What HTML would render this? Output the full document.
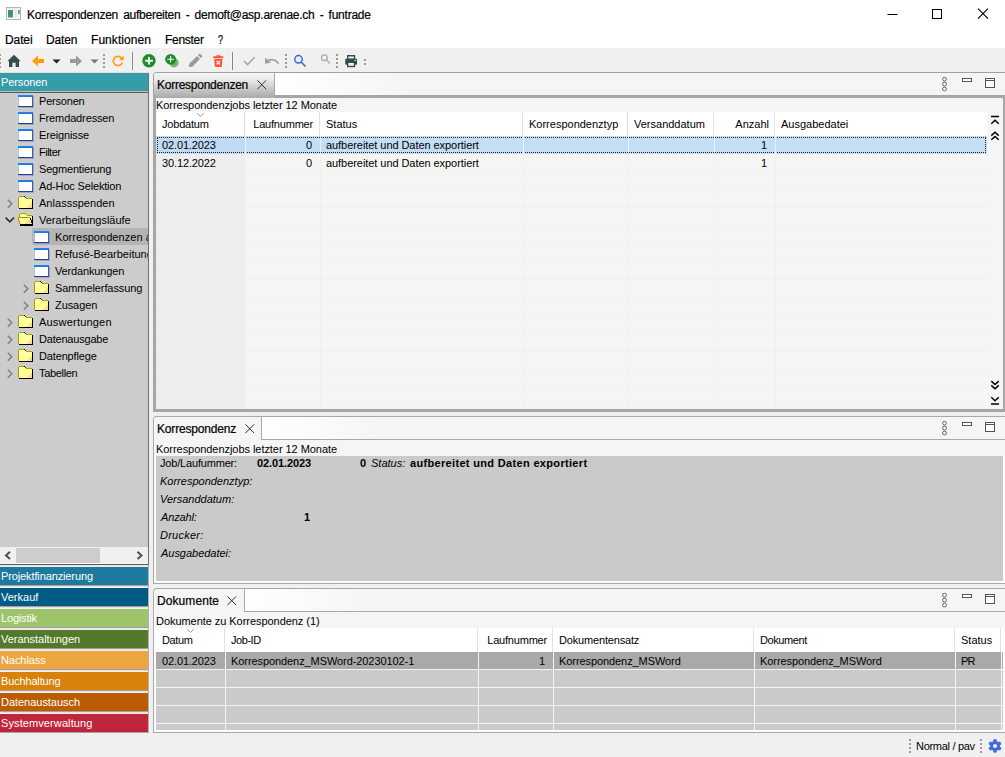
<!DOCTYPE html>
<html lang="de">
<head>
<meta charset="utf-8">
<title>Korrespondenzen aufbereiten - demoft@asp.arenae.ch - funtrade</title>
<style>
*{box-sizing:border-box;margin:0;padding:0}
html,body{width:1005px;height:757px;overflow:hidden;background:#f0f0f0}
body{position:relative;font-family:"Liberation Sans",sans-serif;font-size:11px;color:#000;line-height:1}
.a{position:absolute}
.t{position:absolute;white-space:nowrap;line-height:14px;height:14px;font-size:11px;letter-spacing:0}
.s{font-size:12px;letter-spacing:-0.1px;color:#000;-webkit-text-stroke:0.2px #000}
.l{letter-spacing:-0.05px}
.r{text-align:right}
.b{font-weight:bold}
.i{font-style:italic}
svg{position:absolute;overflow:visible}
.bar{position:absolute;left:0;width:148px;color:#fff}
.bar span{position:absolute;left:1px;top:2px;line-height:14px;white-space:nowrap;font-size:11px}
.win{position:absolute;width:15px;height:12px;border:1px solid #27408b;border-top:2px solid #3a78e0;border-bottom:1px solid #1c2f6b;background:#fff;border-radius:1px}
.hl{position:absolute;height:1px}
.vl{position:absolute;width:1px}
</style>
</head>
<body>
<div class="a" style="left:0px;top:0px;width:1005px;height:30px;background:#fff;"></div>
<div class="a" style="left:0px;top:30px;width:1005px;height:18px;background:#fff;"></div>
<svg style="left:6px;top:7px" width="15" height="13" viewBox="0 0 15 13"><defs><linearGradient id="wi" x1="0" y1="0" x2="0.600" y2="1"><stop offset="0" stop-color="#5583b8"/><stop offset="0.5" stop-color="#3f8f80"/><stop offset="1" stop-color="#44a653"/></linearGradient></defs><rect x="0.5" y="0.5" width="14" height="12" fill="#fbfbfb" stroke="#b2b5b8"/><rect x="1" y="1" width="13" height="1.5" fill="#e8ebee"/><rect x="2" y="3" width="5" height="7.500" fill="url(#wi)"/><rect x="8.500" y="3" width="2.300" height="7.500" fill="#e4e4e4"/><rect x="12" y="3" width="1.800" height="4.300" fill="url(#wi)" opacity="0.850"/></svg>
<div class="t s" style="left:27px;top:8px;letter-spacing:-0.25px;word-spacing:2.1px">Korrespondenzen aufbereiten - demoft@asp.arenae.ch - funtrade</div>
<svg style="left:880px;top:0" width="125" height="30" viewBox="0 0 125 30"><path d="M7.5 14.5h10" stroke="#000" fill="none"/><rect x="52.5" y="9.5" width="9" height="9" stroke="#000" fill="none"/><path d="M98 8.700l10 10M108 8.700l-10 10" stroke="#000" stroke-width="1.1" fill="none"/></svg>
<div class="t s" style="left:5px;top:33px;letter-spacing:-0.1px">Datei</div>
<div class="t s" style="left:46px;top:33px;letter-spacing:-0.15px">Daten</div>
<div class="t s" style="left:91px;top:33px;letter-spacing:0.05px">Funktionen</div>
<div class="t s" style="left:165px;top:33px;letter-spacing:-0.3px">Fenster</div>
<div class="t s" style="left:218px;top:33px;letter-spacing:0px;transform:scaleX(0.75);transform-origin:0 0">?</div>
<div class="a" style="left:0px;top:48px;width:1005px;height:25px;background:#f0f0f0;"></div>
<svg style="left:0;top:48px" width="400" height="25" viewBox="0 0 400 25"><rect x="0" y="6" width="1" height="2" fill="#a49a88"/><rect x="0" y="10" width="1" height="2" fill="#a49a88"/><rect x="0" y="14" width="1" height="2" fill="#a49a88"/><rect x="0" y="18" width="1" height="2" fill="#a49a88"/><path d="M7.300 13.200 L14 6.800 L20.700 13.200 L19 13.200 L19 19 L15.600 19 L15.600 14.700 L12.400 14.700 L12.400 19 L9 19 L9 13.200 Z" fill="#2f4f4f"/><path d="M32 13 L38 7.5 L38 11 L44 11 L44 15 L38 15 L38 18.5 Z" fill="#ff9d0a"/><path d="M52.5 11.5 L60.5 11.5 L56.5 15.5 Z" fill="#222"/><path d="M82 13 L76 7.5 L76 11 L70 11 L70 15 L76 15 L76 18.5 Z" fill="#9a9a9a"/><path d="M90.5 11.5 L98.5 11.5 L94.5 15.5 Z" fill="#777"/><rect x="103" y="6" width="2" height="2" fill="#a49a88"/><rect x="103" y="10" width="2" height="2" fill="#a49a88"/><rect x="103" y="14" width="2" height="2" fill="#a49a88"/><rect x="103" y="18" width="2" height="2" fill="#a49a88"/><path d="M121.400 9.900 A4.600 4.600 0 1 0 122.300 14.400" stroke="#ffa000" stroke-width="1.600" fill="none"/><path d="M123.700 7.700 L123.700 12.300 L119.100 12.300 Z" fill="#ffa000"/><rect x="131" y="4" width="3" height="18" fill="#f8f8f8"/><rect x="132" y="4" width="1" height="18" fill="#858585"/><circle cx="149" cy="12.7" r="6.7" fill="#1e8c2a"/><path d="M145.200 12.700h7.600M149 8.900v7.600" stroke="#fff" stroke-width="1.9"/><circle cx="174" cy="14.8" r="4.6" fill="#5fae62"/><circle cx="174" cy="14.8" r="3.4" fill="none" stroke="#8fca91" stroke-width="0.8"/><circle cx="170.600" cy="11.3" r="5.4" fill="#1e8c2a"/><path d="M167.300 11.300h6.600M170.600 8v6.600" stroke="#fff" stroke-width="1.1"/><path d="M188.900 18.900 L189.300 15.700 L197 8 L200 11 L192.300 18.700 Z M197.900 7.100 L199 6 Q199.700 5.400 200.400 6 L202 7.600 Q202.600 8.300 202 9 L200.900 10.100 Z" fill="#9a9a9a"/><path d="M213.300 8.300h10v2h-10z M216.300 7.200h4v1.500h-4z M214.200 11h8.200l-0.500 7q-0.100 1-1.100 1h-5q-1 0-1.100-1z" fill="#ff5537"/><path d="M216.600 12.800l3.400 3.600M220 12.800l-3.400 3.600" stroke="#fff" stroke-width="1.2"/><rect x="231" y="4" width="3" height="18" fill="#f8f8f8"/><rect x="232" y="4" width="1" height="18" fill="#858585"/><path d="M244 13 L247.500 16.500 L254.700 9.200" stroke="#a8a8a8" stroke-width="1.6" fill="none"/><path d="M266.500 13.500 C270 10.500 275 11 278.500 15.500" stroke="#a0a0a0" stroke-width="1.7" fill="none"/><path d="M265 9.500 L265 15.800 L271 14.800 Z" fill="#a0a0a0"/><rect x="285" y="6" width="2" height="2" fill="#a49a88"/><rect x="285" y="10" width="2" height="2" fill="#a49a88"/><rect x="285" y="14" width="2" height="2" fill="#a49a88"/><rect x="285" y="18" width="2" height="2" fill="#a49a88"/><circle cx="298.500" cy="11.300" r="3.700" stroke="#3a66e6" stroke-width="1.5" fill="none"/><path d="M301.300 14.200 L305.500 18.500" stroke="#3a66e6" stroke-width="1.6"/><circle cx="324.400" cy="9.700" r="2.900" stroke="#a8a8a8" stroke-width="1.2" fill="none"/><path d="M326.500 11.900 L329.800 15.500" stroke="#a8a8a8" stroke-width="1.3"/><rect x="336" y="6" width="2" height="2" fill="#a49a88"/><rect x="336" y="10" width="2" height="2" fill="#a49a88"/><rect x="336" y="14" width="2" height="2" fill="#a49a88"/><rect x="336" y="18" width="2" height="2" fill="#a49a88"/><path d="M347.700 7.700h6.800v3.500h-6.800z" fill="#fafafa" stroke="#2f4f4f" stroke-width="1.4"/><rect x="345.200" y="10.800" width="11.800" height="6" rx="1.200" fill="#2f4f4f"/><rect x="347.700" y="14.300" width="6.800" height="4.200" fill="#f4f4f4" stroke="#2f4f4f" stroke-width="1.4"/><rect x="354.300" y="12" width="1.600" height="1" fill="#c8d4d4"/><rect x="364" y="11" width="2" height="2" fill="#a49a88"/><rect x="364" y="15" width="2" height="2" fill="#a49a88"/></svg>
<div class="a" style="left:0px;top:72px;width:149px;height:1px;background:#e6e0e0;"></div>
<div class="a" style="left:0px;top:73px;width:148px;height:18px;background:#359ca8;"></div>
<div class="a" style="left:0px;top:91px;width:148px;height:1px;background:#c6bebe;"></div>
<div class="a" style="left:0px;top:92px;width:148px;height:1px;background:#585858;"></div>
<div class="t " style="left:1px;top:75px;color:#fff;letter-spacing:-0.12px">Personen</div>
<div class="a" style="left:0px;top:93px;width:148px;height:454px;background:#cccccc;"></div>
<div class="a" style="left:148px;top:73px;width:1px;height:492px;background:#6e6e6e;"></div>
<div class="a" style="left:0;top:92px;width:148px;height:455px;overflow:hidden">
<svg style="left:18px;top:3px" width="16" height="13" viewBox="0 0 16 13" shape-rendering="crispEdges"><rect x="0" y="0" width="15" height="12" fill="#fff"/><rect x="0" y="0" width="15" height="1" fill="#1787f5"/><rect x="0" y="1" width="15" height="1" fill="#2b74e0"/><rect x="0" y="2" width="1" height="10" fill="#a9c4ee"/><rect x="14" y="1" width="1" height="11" fill="#2a62c4"/><rect x="0" y="11" width="15" height="1" fill="#2a3c9c"/><rect x="15" y="1" width="1" height="12" fill="#8d8da0" opacity="0.600"/><rect x="1" y="12" width="14" height="1" fill="#8d8da0" opacity="0.600"/></svg>
<div class="t " style="left:39px;top:2px;letter-spacing:-0.2px;">Personen</div>
<svg style="left:18px;top:20px" width="16" height="13" viewBox="0 0 16 13" shape-rendering="crispEdges"><rect x="0" y="0" width="15" height="12" fill="#fff"/><rect x="0" y="0" width="15" height="1" fill="#1787f5"/><rect x="0" y="1" width="15" height="1" fill="#2b74e0"/><rect x="0" y="2" width="1" height="10" fill="#a9c4ee"/><rect x="14" y="1" width="1" height="11" fill="#2a62c4"/><rect x="0" y="11" width="15" height="1" fill="#2a3c9c"/><rect x="15" y="1" width="1" height="12" fill="#8d8da0" opacity="0.600"/><rect x="1" y="12" width="14" height="1" fill="#8d8da0" opacity="0.600"/></svg>
<div class="t " style="left:39px;top:19px;letter-spacing:-0.13px;">Fremdadressen</div>
<svg style="left:18px;top:37px" width="16" height="13" viewBox="0 0 16 13" shape-rendering="crispEdges"><rect x="0" y="0" width="15" height="12" fill="#fff"/><rect x="0" y="0" width="15" height="1" fill="#1787f5"/><rect x="0" y="1" width="15" height="1" fill="#2b74e0"/><rect x="0" y="2" width="1" height="10" fill="#a9c4ee"/><rect x="14" y="1" width="1" height="11" fill="#2a62c4"/><rect x="0" y="11" width="15" height="1" fill="#2a3c9c"/><rect x="15" y="1" width="1" height="12" fill="#8d8da0" opacity="0.600"/><rect x="1" y="12" width="14" height="1" fill="#8d8da0" opacity="0.600"/></svg>
<div class="t " style="left:39px;top:36px;letter-spacing:-0.13px;">Ereignisse</div>
<svg style="left:18px;top:54px" width="16" height="13" viewBox="0 0 16 13" shape-rendering="crispEdges"><rect x="0" y="0" width="15" height="12" fill="#fff"/><rect x="0" y="0" width="15" height="1" fill="#1787f5"/><rect x="0" y="1" width="15" height="1" fill="#2b74e0"/><rect x="0" y="2" width="1" height="10" fill="#a9c4ee"/><rect x="14" y="1" width="1" height="11" fill="#2a62c4"/><rect x="0" y="11" width="15" height="1" fill="#2a3c9c"/><rect x="15" y="1" width="1" height="12" fill="#8d8da0" opacity="0.600"/><rect x="1" y="12" width="14" height="1" fill="#8d8da0" opacity="0.600"/></svg>
<div class="t " style="left:39px;top:53px;letter-spacing:-0.5px;">Filter</div>
<svg style="left:18px;top:71px" width="16" height="13" viewBox="0 0 16 13" shape-rendering="crispEdges"><rect x="0" y="0" width="15" height="12" fill="#fff"/><rect x="0" y="0" width="15" height="1" fill="#1787f5"/><rect x="0" y="1" width="15" height="1" fill="#2b74e0"/><rect x="0" y="2" width="1" height="10" fill="#a9c4ee"/><rect x="14" y="1" width="1" height="11" fill="#2a62c4"/><rect x="0" y="11" width="15" height="1" fill="#2a3c9c"/><rect x="15" y="1" width="1" height="12" fill="#8d8da0" opacity="0.600"/><rect x="1" y="12" width="14" height="1" fill="#8d8da0" opacity="0.600"/></svg>
<div class="t " style="left:39px;top:70px;letter-spacing:-0.19px;">Segmentierung</div>
<svg style="left:18px;top:88px" width="16" height="13" viewBox="0 0 16 13" shape-rendering="crispEdges"><rect x="0" y="0" width="15" height="12" fill="#fff"/><rect x="0" y="0" width="15" height="1" fill="#1787f5"/><rect x="0" y="1" width="15" height="1" fill="#2b74e0"/><rect x="0" y="2" width="1" height="10" fill="#a9c4ee"/><rect x="14" y="1" width="1" height="11" fill="#2a62c4"/><rect x="0" y="11" width="15" height="1" fill="#2a3c9c"/><rect x="15" y="1" width="1" height="12" fill="#8d8da0" opacity="0.600"/><rect x="1" y="12" width="14" height="1" fill="#8d8da0" opacity="0.600"/></svg>
<div class="t " style="left:39px;top:87px;letter-spacing:-0.17px;">Ad-Hoc Selektion</div>
<svg style="left:7px;top:107px" width="6" height="10" viewBox="0 0 6 10"><path d="M0.800 0.800 L4.800 4.800 L0.800 8.800" stroke="#808080" stroke-width="1.500" fill="none"/></svg>
<svg style="left:18px;top:104px" width="15" height="13" viewBox="0 0 15 13" shape-rendering="crispEdges"><path d="M1 1H6L8 3H14V12H1Z" fill="#ffff99"/><path d="M8 12L14 6V12Z" fill="#ffcc99" opacity="0.750"/><path d="M1 3H7V4H1Z" fill="#ffffd0"/><path d="M1 0H6V1H1ZM0 1H1V12H0ZM8 2H14V3H8Z" fill="#a8a000"/><path d="M6 0H7V1H8V2H7V1H6Z" fill="#1a1a00"/><path d="M14 3H15V13H14ZM1 12H15V13H1Z" fill="#000"/></svg>
<div class="t " style="left:39px;top:104px;letter-spacing:0.03px;">Anlassspenden</div>
<svg style="left:5px;top:125px" width="10" height="6" viewBox="0 0 10 6"><path d="M0.600 0.600 L4.800 4.800 L9 0.600" stroke="#333" stroke-width="1.700" fill="none"/></svg>
<svg style="left:18px;top:121px" width="16" height="13" viewBox="0 0 16 13" shape-rendering="crispEdges"><path d="M2 1H7L9 3H14V6H2Z" fill="#ffff99"/><path d="M2 0H7V1H2ZM1 1H2V6H1ZM9 2H14V3H9Z" fill="#a8a000"/><path d="M7 0H8V1H9V2H8V1H7Z" fill="#a8a000"/><path d="M1 5H12L14 11H3Z" fill="#ffff99"/><path d="M6 11L11 6L13 11Z" fill="#ffcc99" opacity="0.750"/><path d="M0 4H12V5H0ZM0 5H1V8H0ZM1 8H2V11H1Z" fill="#a8a000"/><path d="M14 3H15V12H14ZM2 11H15V13H2ZM12 5H13V7H12ZM13 7H14V10H13Z" fill="#000"/></svg>
<div class="t " style="left:39px;top:121px;letter-spacing:0px;">Verarbeitungsläufe</div>
<div class="a" style="left:32px;top:136px;width:116px;height:17px;background:#b4b4b4;"></div>
<svg style="left:34px;top:139px" width="16" height="13" viewBox="0 0 16 13" shape-rendering="crispEdges"><rect x="0" y="0" width="15" height="12" fill="#fff"/><rect x="0" y="0" width="15" height="1" fill="#1787f5"/><rect x="0" y="1" width="15" height="1" fill="#2b74e0"/><rect x="0" y="2" width="1" height="10" fill="#a9c4ee"/><rect x="14" y="1" width="1" height="11" fill="#2a62c4"/><rect x="0" y="11" width="15" height="1" fill="#2a3c9c"/><rect x="15" y="1" width="1" height="12" fill="#8d8da0" opacity="0.600"/><rect x="1" y="12" width="14" height="1" fill="#8d8da0" opacity="0.600"/></svg>
<div class="t " style="left:55px;top:138px;letter-spacing:0.05px;">Korrespondenzen aufbereiten</div>
<svg style="left:34px;top:156px" width="16" height="13" viewBox="0 0 16 13" shape-rendering="crispEdges"><rect x="0" y="0" width="15" height="12" fill="#fff"/><rect x="0" y="0" width="15" height="1" fill="#1787f5"/><rect x="0" y="1" width="15" height="1" fill="#2b74e0"/><rect x="0" y="2" width="1" height="10" fill="#a9c4ee"/><rect x="14" y="1" width="1" height="11" fill="#2a62c4"/><rect x="0" y="11" width="15" height="1" fill="#2a3c9c"/><rect x="15" y="1" width="1" height="12" fill="#8d8da0" opacity="0.600"/><rect x="1" y="12" width="14" height="1" fill="#8d8da0" opacity="0.600"/></svg>
<div class="t " style="left:55px;top:155px;letter-spacing:0px;">Refusé-Bearbeitung</div>
<svg style="left:34px;top:173px" width="16" height="13" viewBox="0 0 16 13" shape-rendering="crispEdges"><rect x="0" y="0" width="15" height="12" fill="#fff"/><rect x="0" y="0" width="15" height="1" fill="#1787f5"/><rect x="0" y="1" width="15" height="1" fill="#2b74e0"/><rect x="0" y="2" width="1" height="10" fill="#a9c4ee"/><rect x="14" y="1" width="1" height="11" fill="#2a62c4"/><rect x="0" y="11" width="15" height="1" fill="#2a3c9c"/><rect x="15" y="1" width="1" height="12" fill="#8d8da0" opacity="0.600"/><rect x="1" y="12" width="14" height="1" fill="#8d8da0" opacity="0.600"/></svg>
<div class="t " style="left:55px;top:172px;letter-spacing:-0.15px;">Verdankungen</div>
<svg style="left:23px;top:192px" width="6" height="10" viewBox="0 0 6 10"><path d="M0.800 0.800 L4.800 4.800 L0.800 8.800" stroke="#808080" stroke-width="1.500" fill="none"/></svg>
<svg style="left:34px;top:189px" width="15" height="13" viewBox="0 0 15 13" shape-rendering="crispEdges"><path d="M1 1H6L8 3H14V12H1Z" fill="#ffff99"/><path d="M8 12L14 6V12Z" fill="#ffcc99" opacity="0.750"/><path d="M1 3H7V4H1Z" fill="#ffffd0"/><path d="M1 0H6V1H1ZM0 1H1V12H0ZM8 2H14V3H8Z" fill="#a8a000"/><path d="M6 0H7V1H8V2H7V1H6Z" fill="#1a1a00"/><path d="M14 3H15V13H14ZM1 12H15V13H1Z" fill="#000"/></svg>
<div class="t " style="left:55px;top:189px;letter-spacing:-0.09px;">Sammelerfassung</div>
<svg style="left:23px;top:209px" width="6" height="10" viewBox="0 0 6 10"><path d="M0.800 0.800 L4.800 4.800 L0.800 8.800" stroke="#808080" stroke-width="1.500" fill="none"/></svg>
<svg style="left:34px;top:206px" width="15" height="13" viewBox="0 0 15 13" shape-rendering="crispEdges"><path d="M1 1H6L8 3H14V12H1Z" fill="#ffff99"/><path d="M8 12L14 6V12Z" fill="#ffcc99" opacity="0.750"/><path d="M1 3H7V4H1Z" fill="#ffffd0"/><path d="M1 0H6V1H1ZM0 1H1V12H0ZM8 2H14V3H8Z" fill="#a8a000"/><path d="M6 0H7V1H8V2H7V1H6Z" fill="#1a1a00"/><path d="M14 3H15V13H14ZM1 12H15V13H1Z" fill="#000"/></svg>
<div class="t " style="left:55px;top:206px;letter-spacing:-0.08px;">Zusagen</div>
<svg style="left:7px;top:226px" width="6" height="10" viewBox="0 0 6 10"><path d="M0.800 0.800 L4.800 4.800 L0.800 8.800" stroke="#808080" stroke-width="1.500" fill="none"/></svg>
<svg style="left:18px;top:223px" width="15" height="13" viewBox="0 0 15 13" shape-rendering="crispEdges"><path d="M1 1H6L8 3H14V12H1Z" fill="#ffff99"/><path d="M8 12L14 6V12Z" fill="#ffcc99" opacity="0.750"/><path d="M1 3H7V4H1Z" fill="#ffffd0"/><path d="M1 0H6V1H1ZM0 1H1V12H0ZM8 2H14V3H8Z" fill="#a8a000"/><path d="M6 0H7V1H8V2H7V1H6Z" fill="#1a1a00"/><path d="M14 3H15V13H14ZM1 12H15V13H1Z" fill="#000"/></svg>
<div class="t " style="left:39px;top:223px;letter-spacing:0.2px;">Auswertungen</div>
<svg style="left:7px;top:243px" width="6" height="10" viewBox="0 0 6 10"><path d="M0.800 0.800 L4.800 4.800 L0.800 8.800" stroke="#808080" stroke-width="1.500" fill="none"/></svg>
<svg style="left:18px;top:240px" width="15" height="13" viewBox="0 0 15 13" shape-rendering="crispEdges"><path d="M1 1H6L8 3H14V12H1Z" fill="#ffff99"/><path d="M8 12L14 6V12Z" fill="#ffcc99" opacity="0.750"/><path d="M1 3H7V4H1Z" fill="#ffffd0"/><path d="M1 0H6V1H1ZM0 1H1V12H0ZM8 2H14V3H8Z" fill="#a8a000"/><path d="M6 0H7V1H8V2H7V1H6Z" fill="#1a1a00"/><path d="M14 3H15V13H14ZM1 12H15V13H1Z" fill="#000"/></svg>
<div class="t " style="left:39px;top:240px;letter-spacing:-0.2px;">Datenausgabe</div>
<svg style="left:7px;top:260px" width="6" height="10" viewBox="0 0 6 10"><path d="M0.800 0.800 L4.800 4.800 L0.800 8.800" stroke="#808080" stroke-width="1.500" fill="none"/></svg>
<svg style="left:18px;top:257px" width="15" height="13" viewBox="0 0 15 13" shape-rendering="crispEdges"><path d="M1 1H6L8 3H14V12H1Z" fill="#ffff99"/><path d="M8 12L14 6V12Z" fill="#ffcc99" opacity="0.750"/><path d="M1 3H7V4H1Z" fill="#ffffd0"/><path d="M1 0H6V1H1ZM0 1H1V12H0ZM8 2H14V3H8Z" fill="#a8a000"/><path d="M6 0H7V1H8V2H7V1H6Z" fill="#1a1a00"/><path d="M14 3H15V13H14ZM1 12H15V13H1Z" fill="#000"/></svg>
<div class="t " style="left:39px;top:257px;letter-spacing:-0.15px;">Datenpflege</div>
<svg style="left:7px;top:277px" width="6" height="10" viewBox="0 0 6 10"><path d="M0.800 0.800 L4.800 4.800 L0.800 8.800" stroke="#808080" stroke-width="1.500" fill="none"/></svg>
<svg style="left:18px;top:274px" width="15" height="13" viewBox="0 0 15 13" shape-rendering="crispEdges"><path d="M1 1H6L8 3H14V12H1Z" fill="#ffff99"/><path d="M8 12L14 6V12Z" fill="#ffcc99" opacity="0.750"/><path d="M1 3H7V4H1Z" fill="#ffffd0"/><path d="M1 0H6V1H1ZM0 1H1V12H0ZM8 2H14V3H8Z" fill="#a8a000"/><path d="M6 0H7V1H8V2H7V1H6Z" fill="#1a1a00"/><path d="M14 3H15V13H14ZM1 12H15V13H1Z" fill="#000"/></svg>
<div class="t " style="left:39px;top:274px;letter-spacing:-0.33px;">Tabellen</div>
</div>
<div class="a" style="left:0px;top:547px;width:148px;height:17px;background:#f0f0f0;"></div>
<div class="a" style="left:16px;top:548px;width:84px;height:15px;background:#cdcdcd;"></div>
<svg style="left:4px;top:551px" width="8" height="9" viewBox="0 0 8 9"><path d="M6 0.800 L2 4.400 L6 8" stroke="#505050" stroke-width="2" fill="none"/></svg>
<svg style="left:136px;top:551px" width="8" height="9" viewBox="0 0 8 9"><path d="M1.500 0.800 L5.500 4.400 L1.500 8" stroke="#505050" stroke-width="2" fill="none"/></svg>
<div class="a" style="left:0px;top:563px;width:148px;height:1px;background:#fafafa;"></div>
<div class="a" style="left:0px;top:564px;width:149px;height:1px;background:#5c5c5c;"></div>
<div class="a" style="left:0px;top:565px;width:149px;height:1px;background:#e8e2e2;"></div>
<div class="a" style="left:0px;top:566px;width:149px;height:1px;background:#efecec;"></div>
<div class="bar" style="top:567px;height:18px;background:#1f789e"><span style="letter-spacing:-0.12px">Projektfinanzierung</span></div>
<div class="a" style="left:0px;top:585px;width:149px;height:1px;background:#a6a0a0;"></div>
<div class="a" style="left:0px;top:586px;width:149px;height:1px;background:#e6e0e0;"></div>
<div class="a" style="left:0px;top:587px;width:149px;height:1px;background:#f0f0f0;"></div>
<div class="bar" style="top:588px;height:18px;background:#005b85"><span style="letter-spacing:0px">Verkauf</span></div>
<div class="a" style="left:0px;top:606px;width:149px;height:1px;background:#a6a0a0;"></div>
<div class="a" style="left:0px;top:607px;width:149px;height:1px;background:#e6e0e0;"></div>
<div class="a" style="left:0px;top:608px;width:149px;height:1px;background:#f0f0f0;"></div>
<div class="bar" style="top:609px;height:18px;background:#9ec46b"><span style="letter-spacing:-0.17px">Logistik</span></div>
<div class="a" style="left:0px;top:627px;width:149px;height:1px;background:#a6a0a0;"></div>
<div class="a" style="left:0px;top:628px;width:149px;height:1px;background:#e6e0e0;"></div>
<div class="a" style="left:0px;top:629px;width:149px;height:1px;background:#f0f0f0;"></div>
<div class="bar" style="top:630px;height:18px;background:#527a2a"><span style="letter-spacing:-0.03px">Veranstaltungen</span></div>
<div class="a" style="left:0px;top:648px;width:149px;height:1px;background:#a6a0a0;"></div>
<div class="a" style="left:0px;top:649px;width:149px;height:1px;background:#e6e0e0;"></div>
<div class="a" style="left:0px;top:650px;width:149px;height:1px;background:#f0f0f0;"></div>
<div class="bar" style="top:651px;height:18px;background:#eba63f"><span style="letter-spacing:-0.07px">Nachlass</span></div>
<div class="a" style="left:0px;top:669px;width:149px;height:1px;background:#a6a0a0;"></div>
<div class="a" style="left:0px;top:670px;width:149px;height:1px;background:#e6e0e0;"></div>
<div class="a" style="left:0px;top:671px;width:149px;height:1px;background:#f0f0f0;"></div>
<div class="bar" style="top:672px;height:18px;background:#d9820b"><span style="letter-spacing:-0.16px">Buchhaltung</span></div>
<div class="a" style="left:0px;top:690px;width:149px;height:1px;background:#a6a0a0;"></div>
<div class="a" style="left:0px;top:691px;width:149px;height:1px;background:#e6e0e0;"></div>
<div class="a" style="left:0px;top:692px;width:149px;height:1px;background:#f0f0f0;"></div>
<div class="bar" style="top:693px;height:18px;background:#ba5d00"><span style="letter-spacing:-0.03px">Datenaustausch</span></div>
<div class="a" style="left:0px;top:711px;width:149px;height:1px;background:#a6a0a0;"></div>
<div class="a" style="left:0px;top:712px;width:149px;height:1px;background:#e6e0e0;"></div>
<div class="a" style="left:0px;top:713px;width:149px;height:1px;background:#f0f0f0;"></div>
<div class="bar" style="top:714px;height:18px;background:#bf263c"><span style="letter-spacing:0.1px">Systemverwaltung</span></div>
<div class="a" style="left:0px;top:732px;width:149px;height:1px;background:#a6a0a0;"></div>
<div class="a" style="left:0px;top:733px;width:149px;height:1px;background:#e6e0e0;"></div>
<div class="a" style="left:0px;top:734px;width:149px;height:1px;background:#f0f0f0;"></div>
<div class="a" style="left:148px;top:565px;width:1px;height:168px;background:#b8b0b0;"></div>
<div class="a" style="left:153px;top:72px;width:856px;height:30px;border:1px solid #a0a0a0;border-bottom:none;border-radius:4px 4px 0 0;background:#f5f5f5"></div>
<div class="a" style="left:154px;top:73px;width:121px;height:25px;background:linear-gradient(#ffffff 0,#f2f2f2 1px,#ececec 6px,#c4c4c4 17px,#aaaaaa 25px);border-right:1px solid #a8a8a8;border-radius:3px 0 0 0"></div>
<div class="a" style="left:275px;top:73px;width:130px;height:22px;background:linear-gradient(90deg,#fefefe,#f5f5f5)"></div>
<div class="a" style="left:275px;top:95px;width:730px;height:3px;background:#a6a6a6;"></div>
<div class="a" style="left:153px;top:95px;width:3px;height:317px;background:#a6a6a6;"></div>
<div class="a" style="left:1003px;top:95px;width:2px;height:317px;background:#a6a6a6;"></div>
<div class="a" style="left:153px;top:409px;width:852px;height:3px;background:#a6a6a6;"></div>
<div class="a" style="left:156px;top:98px;width:847px;height:311px;background:#f5f5f5;"></div>
<div class="a" style="left:156px;top:136px;width:89px;height:273px;background:#ededed;"></div>
<div class="a" style="left:245px;top:136px;width:742px;height:273px;background:#f5f5f4;"></div>
<div class="t s" style="left:157px;top:78px;letter-spacing:-0.25px">Korrespondenzen</div>
<svg style="left:257px;top:80px" width="10" height="10" viewBox="0 0 10 10"><path d="M0.400 0.400 L9.100 9.100 M9.100 0.400 L0.400 9.100" stroke="#303030" stroke-width="1" fill="none"/></svg>
<svg style="left:940px;top:72px" width="60" height="24" viewBox="0 0 60 24"><circle cx="4.500" cy="7.200" r="1.900" stroke="#505050" stroke-width="0.900" fill="#fff"/><circle cx="4.500" cy="12.100" r="1.900" stroke="#505050" stroke-width="0.900" fill="#fff"/><circle cx="4.500" cy="17" r="1.900" stroke="#505050" stroke-width="0.900" fill="#fff"/><rect x="22.500" y="6.500" width="9" height="3" stroke="#555" fill="#fff"/><rect x="45.500" y="6.500" width="9" height="9" stroke="#555" fill="#fff"/><path d="M45.500 8.500h9" stroke="#555"/></svg>
<div class="t l" style="left:156px;top:98px;">Korrespondenzjobs letzter 12 Monate</div>
<div class="a" style="left:156px;top:112px;width:831px;height:24px;background:#fff;"></div>
<div class="a" style="left:244px;top:112px;width:1px;height:24px;background:#e2e2e2;"></div>
<div class="a" style="left:245px;top:136px;width:1px;height:273px;background:#f0f0f0;"></div>
<div class="a" style="left:319px;top:112px;width:1px;height:24px;background:#e2e2e2;"></div>
<div class="a" style="left:320px;top:136px;width:1px;height:273px;background:#f0f0f0;"></div>
<div class="a" style="left:522px;top:112px;width:1px;height:24px;background:#e2e2e2;"></div>
<div class="a" style="left:523px;top:136px;width:1px;height:273px;background:#f0f0f0;"></div>
<div class="a" style="left:627px;top:112px;width:1px;height:24px;background:#e2e2e2;"></div>
<div class="a" style="left:628px;top:136px;width:1px;height:273px;background:#f0f0f0;"></div>
<div class="a" style="left:713px;top:112px;width:1px;height:24px;background:#e2e2e2;"></div>
<div class="a" style="left:714px;top:136px;width:1px;height:273px;background:#f0f0f0;"></div>
<div class="a" style="left:774px;top:112px;width:1px;height:24px;background:#e2e2e2;"></div>
<div class="a" style="left:775px;top:136px;width:1px;height:273px;background:#f0f0f0;"></div>
<div class="a" style="left:156px;top:153px;width:831px;height:1px;background:#f0f0f0;"></div>
<div class="a" style="left:156px;top:171px;width:831px;height:1px;background:#f0f0f0;"></div>
<div class="a" style="left:156px;top:189px;width:831px;height:1px;background:#f0f0f0;"></div>
<div class="a" style="left:156px;top:207px;width:831px;height:1px;background:#f0f0f0;"></div>
<div class="a" style="left:156px;top:225px;width:831px;height:1px;background:#f0f0f0;"></div>
<div class="a" style="left:156px;top:243px;width:831px;height:1px;background:#f0f0f0;"></div>
<div class="a" style="left:156px;top:261px;width:831px;height:1px;background:#f0f0f0;"></div>
<div class="a" style="left:156px;top:279px;width:831px;height:1px;background:#f0f0f0;"></div>
<div class="a" style="left:156px;top:297px;width:831px;height:1px;background:#f0f0f0;"></div>
<div class="a" style="left:156px;top:315px;width:831px;height:1px;background:#f0f0f0;"></div>
<div class="a" style="left:156px;top:333px;width:831px;height:1px;background:#f0f0f0;"></div>
<div class="a" style="left:156px;top:351px;width:831px;height:1px;background:#f0f0f0;"></div>
<div class="a" style="left:156px;top:369px;width:831px;height:1px;background:#f0f0f0;"></div>
<div class="a" style="left:156px;top:387px;width:831px;height:1px;background:#f0f0f0;"></div>
<div class="a" style="left:156px;top:405px;width:831px;height:1px;background:#f0f0f0;"></div>
<svg style="left:197px;top:113px" width="7" height="4" viewBox="0 0 7 4"><path d="M0.300 0.300 L3.500 3.400 L6.700 0.300" stroke="#8a8a8a" stroke-width="0.900" fill="none"/></svg>
<div class="t " style="left:162px;top:117px;letter-spacing:-0.2px;">Jobdatum</div>
<div class="t r" style="left:245px;top:117px;width:68px;letter-spacing:-0.2px;">Laufnummer</div>
<div class="t " style="left:326px;top:117px;">Status</div>
<div class="t " style="left:529px;top:117px;">Korrespondenztyp</div>
<div class="t " style="left:634px;top:117px;">Versanddatum</div>
<div class="t r" style="left:714px;top:117px;width:55px;">Anzahl</div>
<div class="t " style="left:781px;top:117px;">Ausgabedatei</div>
<div class="a" style="left:156px;top:136px;width:831px;height:18px;background:#c4def6;"></div>
<div class="a" style="left:156px;top:136px;width:89px;height:18px;background:#c0daf3;"></div>
<div class="a" style="left:157px;top:137px;width:829px;height:16px;border:1px dotted #2a1a10"></div>
<div class="a" style="left:245px;top:136px;width:1px;height:18px;background:#e9f1fa;"></div>
<div class="a" style="left:320px;top:136px;width:1px;height:18px;background:#e9f1fa;"></div>
<div class="a" style="left:523px;top:136px;width:1px;height:18px;background:#e9f1fa;"></div>
<div class="a" style="left:628px;top:136px;width:1px;height:18px;background:#e9f1fa;"></div>
<div class="a" style="left:714px;top:136px;width:1px;height:18px;background:#e9f1fa;"></div>
<div class="a" style="left:775px;top:136px;width:1px;height:18px;background:#e9f1fa;"></div>
<div class="t " style="left:162px;top:138px;letter-spacing:-0.12px;">02.01.2023</div>
<div class="t r" style="left:245px;top:138px;width:67px;">0</div>
<div class="t " style="left:326px;top:138px;letter-spacing:-0.06px;">aufbereitet und Daten exportiert</div>
<div class="t r" style="left:714px;top:138px;width:53px;">1</div>
<div class="t " style="left:162px;top:156px;letter-spacing:-0.12px;">30.12.2022</div>
<div class="t r" style="left:245px;top:156px;width:67px;">0</div>
<div class="t " style="left:326px;top:156px;letter-spacing:-0.06px;">aufbereitet und Daten exportiert</div>
<div class="t r" style="left:714px;top:156px;width:53px;">1</div>
<svg style="left:990px;top:110px" width="10" height="32" viewBox="0 0 10 32"><path d="M1 6.500h8 M1.300 13.700 L5 10.300 L8.700 13.700 M1.300 25.600 L5 22.200 L8.700 25.600 M1.300 29.800 L5 26.400 L8.700 29.800" stroke="#000" stroke-width="1.500" fill="none"/></svg>
<svg style="left:990px;top:378px" width="10" height="30" viewBox="0 0 10 30"><path d="M1.300 3.100 L5 6.500 L8.700 3.100 M1.300 7.400 L5 10.800 L8.700 7.400 M1.300 19.300 L5 22.700 L8.700 19.300 M1 26.100h8" stroke="#000" stroke-width="1.500" fill="none"/></svg>
<div class="a" style="left:153px;top:416px;width:852px;height:168px;border:1px solid #a8a8a8;border-right:none;border-radius:4px 0 0 0;background:#f5f5f5"></div>
<div class="a" style="left:154px;top:418px;width:1px;height:165px;background:#fcfcfc;"></div>
<div class="a" style="left:262px;top:417px;width:130px;height:22px;background:linear-gradient(90deg,#fefefe,#f5f5f5)"></div>
<div class="a" style="left:261px;top:417px;width:1px;height:23px;background:#a8a8a8;"></div>
<div class="a" style="left:261px;top:439px;width:744px;height:1px;background:#a8a8a8;"></div>
<div class="t s" style="left:157px;top:422px;letter-spacing:-0.17px">Korrespondenz</div>
<svg style="left:940px;top:416px" width="60" height="24" viewBox="0 0 60 24"><circle cx="4.500" cy="7.200" r="1.900" stroke="#505050" stroke-width="0.900" fill="#fff"/><circle cx="4.500" cy="12.100" r="1.900" stroke="#505050" stroke-width="0.900" fill="#fff"/><circle cx="4.500" cy="17" r="1.900" stroke="#505050" stroke-width="0.900" fill="#fff"/><rect x="22.500" y="6.500" width="9" height="3" stroke="#555" fill="#fff"/><rect x="45.500" y="6.500" width="9" height="9" stroke="#555" fill="#fff"/><path d="M45.500 8.500h9" stroke="#555"/></svg>
<svg style="left:245px;top:424px" width="10" height="10" viewBox="0 0 10 10"><path d="M0.400 0.400 L9.100 9.100 M9.100 0.400 L0.400 9.100" stroke="#303030" stroke-width="1" fill="none"/></svg>
<div class="t l" style="left:156px;top:442px;">Korrespondenzjobs letzter 12 Monate</div>
<div class="a" style="left:154px;top:456px;width:851px;height:127px;background:#fcfcfc;"></div>
<div class="a" style="left:156px;top:456px;width:847px;height:125px;background:#cacaca;"></div>
<div class="t " style="left:160px;top:456px;letter-spacing:-0.18px;">Job/Laufummer:</div>
<div class="t b" style="left:257px;top:456px;letter-spacing:-0.1px">02.01.2023</div>
<div class="t b r" style="left:330px;top:456px;width:36px;">0</div>
<div class="t i" style="left:371px;top:456px;">Status:</div>
<div class="t b" style="left:410px;top:456px;letter-spacing:0.33px">aufbereitet und Daten exportiert</div>
<div class="t i" style="left:160px;top:474px;letter-spacing:0px">Korrespondenztyp:</div>
<div class="t i" style="left:160px;top:492px;letter-spacing:0px">Versanddatum:</div>
<div class="t i" style="left:161px;top:510px;letter-spacing:-0.15px">Anzahl:</div>
<div class="t i" style="left:160px;top:528px;letter-spacing:0.24px">Drucker:</div>
<div class="t i" style="left:161px;top:546px;letter-spacing:-0.03px">Ausgabedatei:</div>
<div class="t b r" style="left:280px;top:510px;width:30px;">1</div>
<div class="a" style="left:153px;top:588px;width:852px;height:145px;border:1px solid #a8a8a8;border-right:none;border-radius:4px 0 0 0;background:#f5f5f5"></div>
<div class="a" style="left:154px;top:590px;width:1px;height:142px;background:#fcfcfc;"></div>
<div class="a" style="left:245px;top:589px;width:130px;height:22px;background:linear-gradient(90deg,#fefefe,#f5f5f5)"></div>
<div class="a" style="left:244px;top:589px;width:1px;height:23px;background:#a8a8a8;"></div>
<div class="a" style="left:244px;top:611px;width:761px;height:1px;background:#a8a8a8;"></div>
<div class="t s" style="left:157px;top:594px;letter-spacing:0.08px">Dokumente</div>
<svg style="left:940px;top:588px" width="60" height="24" viewBox="0 0 60 24"><circle cx="4.500" cy="7.200" r="1.900" stroke="#505050" stroke-width="0.900" fill="#fff"/><circle cx="4.500" cy="12.100" r="1.900" stroke="#505050" stroke-width="0.900" fill="#fff"/><circle cx="4.500" cy="17" r="1.900" stroke="#505050" stroke-width="0.900" fill="#fff"/><rect x="22.500" y="6.500" width="9" height="3" stroke="#555" fill="#fff"/><rect x="45.500" y="6.500" width="9" height="9" stroke="#555" fill="#fff"/><path d="M45.500 8.500h9" stroke="#555"/></svg>
<svg style="left:227px;top:596px" width="10" height="10" viewBox="0 0 10 10"><path d="M0.400 0.400 L9.100 9.100 M9.100 0.400 L0.400 9.100" stroke="#303030" stroke-width="1" fill="none"/></svg>
<div class="t l" style="left:156px;top:614px;">Dokumente zu Korrespondenz (1)</div>
<div class="a" style="left:154px;top:628px;width:851px;height:104px;background:#fcfcfc;"></div>
<div class="a" style="left:156px;top:628px;width:847px;height:24px;background:#fff;"></div>
<div class="a" style="left:156px;top:652px;width:847px;height:78px;background:#cacaca;"></div>
<div class="a" style="left:156px;top:652px;width:847px;height:17px;background:#a9a9a9;"></div>
<div class="a" style="left:224px;top:628px;width:1px;height:24px;background:#e2e2e2;"></div>
<div class="a" style="left:225px;top:652px;width:1px;height:78px;background:#f4f4f4;"></div>
<div class="a" style="left:477px;top:628px;width:1px;height:24px;background:#e2e2e2;"></div>
<div class="a" style="left:478px;top:652px;width:1px;height:78px;background:#f4f4f4;"></div>
<div class="a" style="left:552px;top:628px;width:1px;height:24px;background:#e2e2e2;"></div>
<div class="a" style="left:553px;top:652px;width:1px;height:78px;background:#f4f4f4;"></div>
<div class="a" style="left:753px;top:628px;width:1px;height:24px;background:#e2e2e2;"></div>
<div class="a" style="left:754px;top:652px;width:1px;height:78px;background:#f4f4f4;"></div>
<div class="a" style="left:954px;top:628px;width:1px;height:24px;background:#e2e2e2;"></div>
<div class="a" style="left:955px;top:652px;width:1px;height:78px;background:#f4f4f4;"></div>
<div class="a" style="left:1000px;top:628px;width:1px;height:24px;background:#e2e2e2;"></div>
<div class="a" style="left:1001px;top:652px;width:1px;height:78px;background:#f4f4f4;"></div>
<div class="a" style="left:156px;top:669px;width:847px;height:1px;background:#f4f4f4;"></div>
<div class="a" style="left:156px;top:687px;width:847px;height:1px;background:#f4f4f4;"></div>
<div class="a" style="left:156px;top:705px;width:847px;height:1px;background:#f4f4f4;"></div>
<div class="a" style="left:156px;top:723px;width:847px;height:1px;background:#f4f4f4;"></div>
<svg style="left:187px;top:629px" width="7" height="4" viewBox="0 0 7 4"><path d="M0.300 0.300 L3.500 3.400 L6.700 0.300" stroke="#8a8a8a" stroke-width="0.900" fill="none"/></svg>
<div class="t " style="left:162px;top:633px;letter-spacing:-0.4px;">Datum</div>
<div class="t " style="left:231px;top:633px;letter-spacing:-0.45px;">Job-ID</div>
<div class="t r" style="left:478px;top:633px;width:69px;letter-spacing:-0.2px;">Laufnummer</div>
<div class="t " style="left:559px;top:633px;letter-spacing:-0.17px;">Dokumentensatz</div>
<div class="t " style="left:760px;top:633px;letter-spacing:-0.4px;">Dokument</div>
<div class="t " style="left:961px;top:633px;">Status</div>
<div class="t " style="left:162px;top:654px;letter-spacing:-0.12px;">02.01.2023</div>
<div class="t " style="left:231px;top:654px;letter-spacing:-0.08px;">Korrespondenz_MSWord-20230102-1</div>
<div class="t r" style="left:478px;top:654px;width:67px;">1</div>
<div class="t " style="left:559px;top:654px;letter-spacing:-0.08px;">Korrespondenz_MSWord</div>
<div class="t " style="left:760px;top:654px;letter-spacing:-0.08px;">Korrespondenz_MSWord</div>
<div class="t " style="left:961px;top:654px;letter-spacing:-0.8px">PR</div>
<div class="a" style="left:0px;top:733px;width:1005px;height:24px;background:#f0f0f0;"></div>
<div class="a" style="left:909px;top:739px;width:2px;height:2px;background:#a49a88"></div>
<div class="a" style="left:909px;top:743px;width:2px;height:2px;background:#a49a88"></div>
<div class="a" style="left:909px;top:747px;width:2px;height:2px;background:#a49a88"></div>
<div class="a" style="left:909px;top:751px;width:2px;height:2px;background:#a49a88"></div>
<div class="a" style="left:980px;top:739px;width:2px;height:2px;background:#a49a88"></div>
<div class="a" style="left:980px;top:743px;width:2px;height:2px;background:#a49a88"></div>
<div class="a" style="left:980px;top:747px;width:2px;height:2px;background:#a49a88"></div>
<div class="a" style="left:980px;top:751px;width:2px;height:2px;background:#a49a88"></div>
<div class="t " style="left:916px;top:739px;letter-spacing:-0.3px">Normal / pav</div>
<svg style="left:988px;top:739px" width="14" height="14" viewBox="0 0 14 14"><g fill="#4169e1"><circle cx="7" cy="7" r="4.900"/><rect x="5.200" y="0.300" width="3.600" height="4" rx="1.100" transform="rotate(0 7 7)"/><rect x="5.200" y="0.300" width="3.600" height="4" rx="1.100" transform="rotate(60 7 7)"/><rect x="5.200" y="0.300" width="3.600" height="4" rx="1.100" transform="rotate(120 7 7)"/><rect x="5.200" y="0.300" width="3.600" height="4" rx="1.100" transform="rotate(180 7 7)"/><rect x="5.200" y="0.300" width="3.600" height="4" rx="1.100" transform="rotate(240 7 7)"/><rect x="5.200" y="0.300" width="3.600" height="4" rx="1.100" transform="rotate(300 7 7)"/></g><circle cx="7" cy="7" r="2.100" fill="#f0f0f0"/></svg>
</body>
</html>
